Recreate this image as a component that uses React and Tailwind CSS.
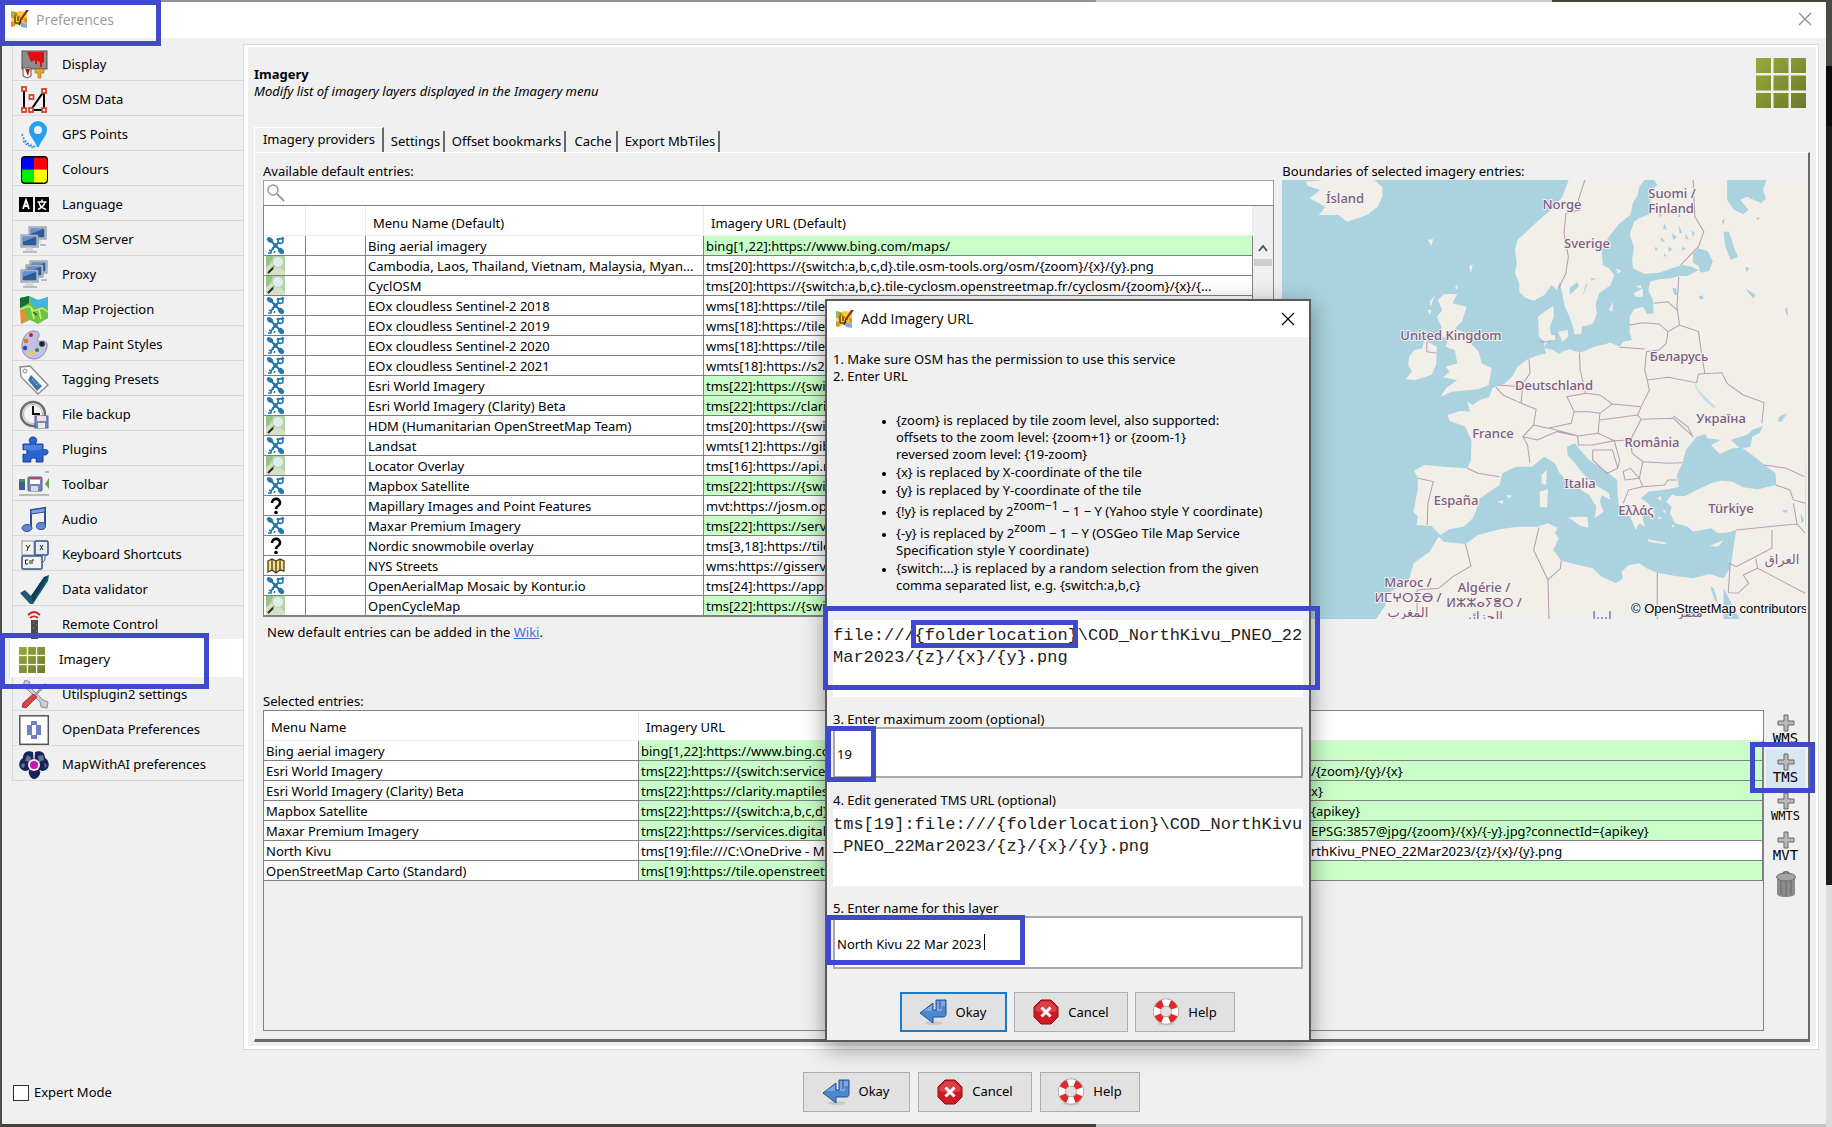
import React from "react";

/* ---------- shared icons ---------- */

function JosmIcon() {
  return (
    <svg width="20" height="20" viewBox="0 0 20 20" aria-hidden="true" className="shrink-0">
      <path d="M1 2l5 1 4-1 7 1v13l-4 1-5-1-6 2z" fill="#f3cf3a" />
      <path d="M1 2l5 1-1 4-4 2z" fill="#8fc15a" />
      <path d="M1 12l4 2v3l-4 1zM14 9h3v5l-3-1z" fill="#d9923a" />
      <path d="M10 13l7 2v4l-6-1z" fill="#8ea7d8" />
      <path d="M5 6v8M8 7v5M5 14h4" stroke="#5b4a20" strokeWidth="1.5" fill="none" />
      <path d="M4 4l9 7M3 9l4-5" stroke="#e0631c" strokeWidth="1.2" />
      <path d="M19 1l-8 11-2 3 .5-4L16 1z" fill="#8c2f10" />
      <path d="M9 16l2-4" stroke="#2a2a2a" strokeWidth="1.3" />
    </svg>
  );
}

function GridIcon({ size }) {
  const cells = [0, 1, 2, 3, 4, 5, 6, 7, 8];
  return (
    <svg width={size} height={size} viewBox="0 0 50 50" aria-hidden="true" className="shrink-0">
      <defs>
        <linearGradient id="olive" gradientUnits="userSpaceOnUse" x1="0" y1="0" x2="50" y2="50">
          <stop offset="0" stopColor="#98aa3d" />
          <stop offset="1" stopColor="#6b7a2a" />
        </linearGradient>
      </defs>
      {cells.map((n) => (
        <rect key={n} x={(n % 3) * 17.5} y={Math.floor(n / 3) * 17.5} width="15" height="15" fill="url(#olive)" />
      ))}
    </svg>
  );
}

function Monitor({ x, y }) {
  return (
    <g transform={`translate(${x} ${y})`}>
      <rect x="0" y="0" width="17" height="12" fill="#dfe3e8" stroke="#7d8794" />
      <rect x="1.5" y="1.5" width="14" height="9" fill="#2f5a9c" />
      <path d="M1.5 1.5h14L1.5 7z" fill="#6b90c8" />
      <path d="M6 12.5h5l2 3.5H3z" fill="#d5d8dc" />
    </g>
  );
}

const sideIcons = {
  display: (
    <>
      <rect x="3" y="1" width="25" height="18" fill="#8d8d8d" stroke="#555" />
      <path d="M8 2h17v10l-2 1v4h-2v-5l-3-1v3h-2v-4l-4 2z" fill="#e01010" />
      <path d="M4 18h8v8l-4 2-4-2z" fill="#f5f5f5" stroke="#555" />
      <path d="M6 19l3 7 2-7z" fill="#d01515" />
      <path d="M16 19h9v4h-3v5h-3v-5h-3z" fill="#e2a82b" stroke="#9a6a10" strokeWidth=".6" />
    </>
  ),
  data: (
    <>
      <path d="M12 25h13V6z" fill="none" stroke="#000" strokeWidth="2" />
      <path d="M5 25V4" stroke="#000" strokeWidth="2" />
      {[[5, 4], [5, 25], [12, 25], [25, 25], [25, 6], [12.5, 12]].map(([x, y]) => (
        <rect key={`${x}-${y}`} x={x - 2} y={y - 2} width="4" height="4" fill="#fff" stroke="#d2452a" strokeWidth="1.8" />
      ))}
    </>
  ),
  gps: (
    <>
      <path d="M19 1a9 9 0 0 1 9 9c0 6-6 10-8 17h-2c-2-7-8-11-8-17a9 9 0 0 1 9-9z" fill="#27a0f2" />
      <circle cx="19" cy="10" r="4" fill="#f0f0f0" />
      <path d="M3 14c2 6 4 10 14 13M4 21c4 4 7 6 12 7" fill="none" stroke="#3a8fe0" strokeWidth="1.6" strokeDasharray="2 1.5" />
    </>
  ),
  colours: (
    <>
      <rect x="2" y="1" width="27" height="28" rx="4" fill="#000" />
      <path d="M15 2.500v12H3V6a3 3 0 0 1 3-3.500z" fill="#00f" />
      <path d="M15 2.500h9a3 3 0 0 1 4 3.500v8.500H15z" fill="#f00" />
      <path d="M3 14.500h12v13H6a3 3 0 0 1-3-3z" fill="#0e0" />
      <path d="M15 14.500h13v10a3 3 0 0 1-4 3h-9z" fill="#ff0" />
    </>
  ),
  language: (
    <>
      <rect x="0" y="7" width="14" height="15" fill="#000" />
      <rect x="16" y="7" width="14" height="15" fill="#000" />
      <path d="M4 19l3-9 3 9M5 16h4" stroke="#fff" strokeWidth="1.8" fill="none" />
      <path d="M18.500 12h9M23 9.500V12M26 12c-1 4-4 6-7 7.500M20 13c1 3 4 5.500 7 6.500" stroke="#fff" strokeWidth="1.5" fill="none" />
    </>
  ),
  server: (
    <>
      <Monitor x="10" y="2" />
      <Monitor x="2" y="10" />
      <path d="M4 27h14M21 20h6" stroke="#b6bcc4" strokeWidth="2" />
    </>
  ),
  proxy: (
    <>
      <Monitor x="11" y="1" />
      <Monitor x="7" y="5" />
      <Monitor x="2" y="10" />
      <path d="M4 27h14M22 20h6" stroke="#b6bcc4" strokeWidth="2" />
    </>
  ),
  projection: (
    <>
      <path d="M1 3l9-2 9 4 10-3v21l-10 6-8-4-9 4z" fill="#6fc24a" />
      <path d="M10 1l9 4 10-3v9l-9 3-6-3z" fill="#45b3e0" />
      <path d="M1 3l9-2v7l-9 5z" fill="#176a3c" />
      <path d="M1 14l5 2 2 9-6 4z" fill="#f08a2a" />
      <path d="M2 14l8-3 5 5 8-3 6 4M12 12l3 12M20 15l2 9" fill="none" stroke="#d8ee6a" strokeWidth="1.5" />
      <path d="M14 17l4 3" stroke="#24602a" strokeWidth="1.5" />
    </>
  ),
  paint: (
    <>
      <path d="M14 1c4 0 6 1 6 4s-3 4-1 6c2 1 8-2 9 3s-4 15-13 15C7 29 2 22 3 14S9 1 14 1z" fill="#c5c1e6" stroke="#777390" strokeWidth=".8" />
      <circle cx="12" cy="5" r="2" fill="#c8202a" />
      <circle cx="7" cy="11" r="2.3" fill="#e07a1c" />
      <circle cx="6" cy="18" r="2.2" fill="#2847c0" />
      <circle cx="12" cy="23" r="2.3" fill="#e9d52d" />
      <circle cx="18" cy="20" r="2" fill="#2f8f3a" />
      <circle cx="23" cy="14" r="2.8" fill="#222" />
    </>
  ),
  tagging: (
    <>
      <path d="M1 2l10-1 18 19-10 9L2 12z" fill="#fbfbfb" stroke="#8b8b8b" strokeWidth="1.3" />
      <circle cx="6" cy="6" r="2" fill="#f0f0f0" stroke="#8b8b8b" />
      <path d="M12 10l11 11-5 5-9-11z" fill="#3f73a8" />
      <path d="M13 14l6 7M16 13l5 7" stroke="#bcd3ea" strokeDasharray="2 1" />
    </>
  ),
  backup: (
    <>
      <circle cx="14" cy="14" r="12" fill="#f4f4f0" stroke="#6d6d6d" strokeWidth="2.5" />
      <circle cx="14" cy="14" r="9.5" fill="none" stroke="#b5b5b5" />
      <path d="M14 6v8h7" stroke="#111" strokeWidth="2" fill="none" />
      <rect x="16" y="16" width="13" height="12" fill="#6e8cc0" stroke="#4a6394" />
      <rect x="18" y="16" width="9" height="5" fill="#f6dede" />
      <rect x="19" y="23" width="7" height="5" fill="#e8e8e8" />
    </>
  ),
  plugins: (
    <>
      <path
        d="M4 9h8c-3-3-2-7 2-7s5 4 2 7h8v6c1-1 5-1 5 2s-4 4-5 2v8h-7c1-3 0-4-2-4s-4 1-3 4H4v-8c3 1 4 0 4-2s-1-3-4-2z"
        fill="#2a62cf"
        stroke="#1c3f91"
      />
      <path d="M5 10h18v4c-6 2-12 2-18 0z" fill="#5c8ce6" opacity=".7" />
    </>
  ),
  toolbar: (
    <>
      <rect x="0" y="9" width="6" height="11" fill="#3c5f94" />
      <rect x="0" y="9" width="6" height="3" fill="#4d8a63" />
      <rect x="9" y="7" width="14" height="14" rx="1" fill="#7684b6" stroke="#54608c" />
      <rect x="11" y="8" width="10" height="6" fill="#fff" />
      <rect x="11" y="8" width="10" height="1.5" fill="#d43c3c" />
      <rect x="12" y="16" width="7" height="5" fill="#d7dae6" />
      <path d="M30 8v11l-4-5z" fill="#5ca53f" />
      <path d="M0 25h30" stroke="#6f8f6a" />
      <path d="M26 2h4" stroke="#7a8a98" />
    </>
  ),
  audio: (
    <>
      <path d="M12 23V5l14-2v18" fill="none" stroke="#2c4f9e" strokeWidth="2" />
      <path d="M12 5l14-2v4L12 9z" fill="#7ea2dc" stroke="#2c4f9e" />
      <ellipse cx="8" cy="23" rx="5" ry="3.5" fill="#5f88cf" stroke="#2c4f9e" />
      <ellipse cx="22" cy="21" rx="4.5" ry="3.5" fill="#5f88cf" stroke="#2c4f9e" />
    </>
  ),
  keyboard: (
    <>
      <rect x="3" y="1" width="12" height="14" fill="#f4f4ee" stroke="#8d96a6" />
      <rect x="16" y="1" width="13" height="14" rx="1" fill="#e9edf3" stroke="#33518c" strokeWidth="1.5" />
      <rect x="3" y="16" width="20" height="13" rx="1" fill="#f4f4ee" stroke="#33518c" strokeWidth="1.5" />
      <path d="M23 22c3 0 3-3 3-6" fill="none" stroke="#33518c" />
      <path d="M7 5l2 3 2-3M9 8l-1 3M21 5l3 5M24 5l-3 5M9 20H6.500v4H9M11 20v4M15 20h-2v4" stroke="#222" fill="none" />
    </>
  ),
  validator: (
    <>
      <path d="M1 18l5-3 6 6L25 2l5-2-1 6-15 23h-3z" fill="#1c5a70" />
      <path d="M12 21L25 2l4-1-15 26z" fill="#0f3f55" />
    </>
  ),
  remote: (
    <>
      <path d="M9 5c4-4 8-4 12 0M11 8c3-2.500 5-2.500 8 0" fill="none" stroke="#d01f1f" strokeWidth="1.8" />
      <rect x="12" y="10" width="7" height="19" fill="#4e4a48" />
      <path d="M14 13h1M17 15h1M14 18h1M17 21h1" stroke="#9b9691" />
    </>
  ),
  utils: (
    <>
      <path d="M6 0l5 2-1 4 14 14 5 2-1 6-6-1-1-5L8 9 3 8z" fill="#c9ccd2" stroke="#8b8f97" />
      <path d="M27 4l-12 12" stroke="#9aa0aa" strokeWidth="2.5" />
      <path d="M14 14l4 3-11 11-4-1 1-4z" fill="#d94343" stroke="#932222" strokeWidth=".7" />
    </>
  ),
  opendata: (
    <>
      <rect x=".8" y=".8" width="28.5" height="28.5" fill="#fff" stroke="#555" strokeWidth="1.5" />
      <path d="M12 6h6v4h-6zM12 20h6v4h-6zM8 10h5v10H8zM17 10h5v10h-5z" fill="#6c84c4" />
    </>
  ),
  ai: (
    <>
      <path d="M14 2C8 0 4 3 4 8c-4 2-5 8-2 11 3 3 7 2 9 0l4-3zM16 2c6-2 10 1 10 6 4 2 5 8 2 11-3 3-7 2-9 0l-4-3z" fill="#14235c" />
      <path d="M15 18c-5 0-6 3-5 6s3 5 5 5 5-2 6-5-1-6-6-6z" fill="#14235c" />
      <path d="M8 5l4 2-1 5-5-1zM19 6l5-1 1 5-5 2zM3 13l3 1-1 4-3-1zM25 13l3 2-2 3z" fill="#6c7187" />
      <circle cx="15" cy="15" r="6" fill="#f4eef4" />
      <circle cx="15" cy="15" r="4" fill="#d010b8" />
    </>
  ),
};

function SideIcon({ name }) {
  return (
    <svg width="30" height="30" viewBox="0 0 30 30" aria-hidden="true" className="shrink-0">
      {sideIcons[name]}
    </svg>
  );
}

function OkIcon() {
  return (
    <svg width="28" height="28" viewBox="0 0 28 28" aria-hidden="true">
      <ellipse cx="15" cy="25" rx="9" ry="2" fill="#c9c9c9" />
      <path d="M17 2h10v14c0 2-1 3-3 3H14v6L1 15 14 5v7h3z" fill="#4f86d0" stroke="#244f93" />
      <path d="M18 3h8v5h-3v5H4l9-6v6h5z" fill="#8db4e8" opacity=".7" />
      <path d="M21 2v9" stroke="#244f93" />
    </svg>
  );
}

function CancelIcon() {
  return (
    <svg width="28" height="28" viewBox="0 0 28 28" aria-hidden="true">
      <path d="M9 2h10l7 7v10l-7 7H9l-7-7V9z" fill="#cf1b24" stroke="#8d0d12" />
      <path d="M9.500 3.500h9l6 6V13c-7 2-14 2-21 0V9.500z" fill="#e8656a" opacity=".5" />
      <path d="M9.500 9.500l9 9M18.500 9.500l-9 9" stroke="#fff" strokeWidth="3" />
    </svg>
  );
}

function HelpIcon() {
  return (
    <svg width="28" height="28" viewBox="0 0 28 28" aria-hidden="true">
      <ellipse cx="14" cy="26" rx="9" ry="1.5" fill="#c9c9c9" />
      <circle cx="14" cy="13.5" r="9" fill="none" stroke="#a89a9a" strokeWidth="8" />
      <circle cx="14" cy="13.5" r="9" fill="none" stroke="#fdfdfd" strokeWidth="6.5" />
      <circle
        cx="14"
        cy="13.5"
        r="9"
        fill="none"
        stroke="#dc2a2a"
        strokeWidth="6.5"
        strokeDasharray="7.07 7.07"
        strokeDashoffset="-3.5"
      />
    </svg>
  );
}

/* ---------- small table icons ---------- */

function RowIcon({ kind }) {
  if (kind === "sat")
    return (
      <svg width="19" height="19" viewBox="0 0 19 19" aria-label="Aerial" className="block">
        <ellipse cx="4" cy="4" rx="3.5" ry="2.3" transform="rotate(35 4 4)" fill="#2378ae" />
        <ellipse cx="15" cy="15" rx="3.5" ry="2.6" transform="rotate(45 15 15)" fill="#2378ae" />
        <path d="M6 6l7 7M13 6l-7 7" stroke="#2378ae" strokeWidth="2" />
        <circle cx="9.5" cy="9.5" r="2.2" fill="#2378ae" />
        <circle cx="14.5" cy="5" r="2.4" fill="none" stroke="#2378ae" strokeWidth="1.6" />
        <path d="M16 1l2 2M12 2l-1 2M2 17h3c0-3 1-4 3-4M3 14l2 1M8 17l1-2" stroke="#2378ae" strokeWidth="1.6" fill="none" />
      </svg>
    );
  if (kind === "map")
    return (
      <svg width="19" height="19" viewBox="0 0 19 19" aria-label="Map" className="block">
        <rect width="19" height="19" fill="#b9d3a2" />
        <path d="M0 12l7-6 12 10v3H0z" fill="#d5e2c6" />
        <path d="M0 0h7l-3 8-4 3z" fill="#9cc186" />
        <circle cx="12" cy="6" r="5.5" fill="#dfeee6" stroke="#b9cfc0" />
        <path d="M8 10l-3 4" stroke="#8a8f7c" strokeWidth="1.5" />
        <path d="M7 12l-5 5" stroke="#2a2c24" strokeWidth="2.2" />
      </svg>
    );
  if (kind === "ask")
    return (
      <svg width="19" height="19" viewBox="0 0 19 19" aria-label="Other" className="block">
        <path d="M6 7c0-5.500 8-5.500 8 0 0 3.500-4 2.500-4 6" fill="none" stroke="#000" strokeWidth="2.6" />
        <circle cx="10" cy="16.500" r="1.800" />
      </svg>
    );
  return (
    <svg width="19" height="19" viewBox="0 0 19 19" aria-label="Street map" className="block">
      <path d="M2 5l4-2 4 2 4-2 4 2v10l-4-1-4 3-4-3-4 2z" fill="#f3dc8c" stroke="#4b3d16" strokeWidth="1.3" />
      <path d="M6 3v11M10 5v11M14 3v11" stroke="#4b3d16" strokeWidth="1.3" />
    </svg>
  );
}

/* ---------- data ---------- */

const tabs = [
  ["display", "Display"],
  ["data", "OSM Data"],
  ["gps", "GPS Points"],
  ["colours", "Colours"],
  ["language", "Language"],
  ["server", "OSM Server"],
  ["proxy", "Proxy"],
  ["projection", "Map Projection"],
  ["paint", "Map Paint Styles"],
  ["tagging", "Tagging Presets"],
  ["backup", "File backup"],
  ["plugins", "Plugins"],
  ["toolbar", "Toolbar"],
  ["audio", "Audio"],
  ["keyboard", "Keyboard Shortcuts"],
  ["validator", "Data validator"],
  ["remote", "Remote Control"],
  ["imagery", "Imagery"],
  ["utils", "Utilsplugin2 settings"],
  ["opendata", "OpenData Preferences"],
  ["ai", "MapWithAI preferences"],
];

const defaults = [
  ["sat", "Bing aerial imagery", "bing[1,22]:https://www.bing.com/maps/", true],
  ["map", "Cambodia, Laos, Thailand, Vietnam, Malaysia, Myan...", "tms[20]:https://{switch:a,b,c,d}.tile.osm-tools.org/osm/{zoom}/{x}/{y}.png"],
  ["map", "CyclOSM", "tms[20]:https://{switch:a,b,c}.tile-cyclosm.openstreetmap.fr/cyclosm/{zoom}/{x}/{..."],
  ["sat", "EOx cloudless Sentinel-2 2018", "wms[18]:https://tiles.maps.eox.at/wms"],
  ["sat", "EOx cloudless Sentinel-2 2019", "wms[18]:https://tiles.maps.eox.at/wms"],
  ["sat", "EOx cloudless Sentinel-2 2020", "wms[18]:https://tiles.maps.eox.at/wms"],
  ["sat", "EOx cloudless Sentinel-2 2021", "wmts[18]:https://s2maps-tiles.eu/wmts"],
  ["sat", "Esri World Imagery", "tms[22]:https://{switch:services,server}.arcgisonline.com", true],
  ["sat", "Esri World Imagery (Clarity) Beta", "tms[22]:https://clarity.maptiles.arcgis.com", true],
  ["map", "HDM (Humanitarian OpenStreetMap Team)", "tms[20]:https://{switch:a,b}.tile.openstreetmap.fr"],
  ["sat", "Landsat", "wmts[12]:https://gibs.earthdata.nasa.gov"],
  ["map", "Locator Overlay", "tms[16]:https://api.mapbox.com"],
  ["sat", "Mapbox Satellite", "tms[22]:https://{switch:a,b,c,d}.tiles.mapbox.com", true],
  ["ask", "Mapillary Images and Point Features", "mvt:https://josm.openstreetmap.de/mapillary"],
  ["sat", "Maxar Premium Imagery", "tms[22]:https://services.digitalglobe.com", true],
  ["ask", "Nordic snowmobile overlay", "tms[3,18]:https://tiles.opensnowmap.org"],
  ["old", "NYS Streets", "wms:https://gisservices.its.ny.gov"],
  ["sat", "OpenAerialMap Mosaic by Kontur.io", "tms[24]:https://apps.kontur.io/raster-tiler"],
  ["map", "OpenCycleMap", "tms[22]:https://{switch:a,b,c}.tile.thunderforest.com", true],
];

const selected = [
  ["Bing aerial imagery", "bing[1,22]:https://www.bing.com/maps/", "", true],
  ["Esri World Imagery", "tms[22]:https://{switch:services,server}.arcgisonline.com/arcgis/rest/services/World_Imagery/MapServer/tile", "/{zoom}/{y}/{x}", true],
  ["Esri World Imagery (Clarity) Beta", "tms[22]:https://clarity.maptiles.arcgis.com/arcgis/rest/services/World_Imagery/MapServer/tile/{zoom}/{y}/{", "x}", true],
  ["Mapbox Satellite", "tms[22]:https://{switch:a,b,c,d}.tiles.mapbox.com/v4/mapbox.satellite/{zoom}/{x}/{y}.jpg?access_token=", "{apikey}", true],
  ["Maxar Premium Imagery", "tms[22]:https://services.digitalglobe.com/earthservice/tmsaccess/tms/1.0.0/DigitalGlobe:ImageryTileService@", "EPSG:3857@jpg/{zoom}/{x}/{-y}.jpg?connectId={apikey}", true],
  ["North Kivu", "tms[19]:file:///C:\\OneDrive - MapAction\\Imagery\\Democratic Republic of Congo\\PNEO\\COD_No", "rthKivu_PNEO_22Mar2023/{z}/{x}/{y}.png"],
  ["OpenStreetMap Carto (Standard)", "tms[19]:https://tile.openstreetmap.org/{zoom}/{x}/{y}.png", "", true],
];

/* ---------- map preview ---------- */

const labels = [
  ["Ísland", 210, 160],
  ["Norge", 813, 177],
  ["Suomi /", 1120, 144],
  ["Finland", 1118, 189],
  ["Sverige", 885, 294],
  ["United Kingdom", 505, 571],
  ["Беларусь", 1140, 633],
  ["Deutschland", 793, 721],
  ["Україна", 1257, 818],
  ["France", 621, 863],
  ["România", 1065, 890],
  ["Italia", 864, 1015],
  ["España", 519, 1066],
  ["Ελλάς", 1020, 1096],
  ["Türkiye", 1287, 1090],
  ["العراق", 1428, 1243],
  ["Maroc /", 384, 1311],
  ["ⵍⵎⵖⵔⵉⴱ /", 384, 1355],
  ["المغرب", 384, 1400],
  ["Algérie /", 596, 1325],
  ["ⵍⵣⵣⴰⵢⴻⵔ /", 596, 1370],
  ["الجزائر", 598, 1412],
  ["ليبيا", 927, 1412],
  ["مصر", 1170, 1400],
];

function EuropeMap() {
  return (
    <svg
      viewBox="0 0 524 439"
      preserveAspectRatio="xMinYMin slice"
      role="img"
      aria-label="Map of Europe"
      className="block h-[439px] w-full bg-[#aad3df]"
    >
      <g transform="scale(.3584 .3333) translate(-33 -90)">
        <g fill="#f2efe9">
          <path d="M833 90L815 140 790 175 760 200 735 225 715 245 690 270 683 300 688 340 683 370 695 400 695 425 712 443 735 452 765 435 785 405 800 420 808 395 815 430 822 470 835 500 845 530 848 553 868 553 870 530 900 522 912 490 908 465 918 430 950 405 960 375 945 355 928 345 925 300 945 260 975 220 1005 195 1012 160 1025 135 1030 110 1045 90Z" />
          <path d="M1072 90L1080 105 1058 130 1065 190 1030 205 1015 215 1003 255 1015 290 1010 330 1012 355 1045 372 1085 368 1120 355 1150 345 1175 350 1195 360 1165 378 1140 378 1120 385 1085 388 1060 395 1055 420 1068 450 1070 490 1052 492 1040 470 1015 478 1003 500 1003 550 1010 570 985 575 975 590 950 578 905 590 865 608 835 598 815 605 805 612 790 600 765 595 765 575 750 560 747 500 765 485 790 468 792 500 780 530 785 560 765 590 770 610 740 618 715 630 690 650 675 680 655 700 620 715 612 740 585 750 565 765 550 755 558 785 530 783 495 795 500 812 545 830 552 850 562 870 560 930 550 955 500 952 430 945 402 962 412 985 412 1015 400 1085 412 1100 408 1125 450 1128 475 1155 500 1138 540 1130 565 1105 575 1080 585 1045 640 1005 648 970 685 950 730 950 765 920 795 940 805 965 820 985 860 1015 890 1035 910 1070 905 1105 930 1085 920 1055 925 1035 950 1050 945 1030 900 1000 872 970 850 940 830 915 828 890 850 880 865 900 890 930 945 970 968 990 970 1040 975 1080 1005 1100 1020 1140 1030 1120 1045 1130 1035 1085 1075 1095 1055 1060 1035 1045 1055 1025 1110 1018 1140 1010 1135 975 1150 940 1160 900 1190 860 1215 852 1220 865 1258 870 1230 885 1255 912 1290 895 1310 893 1285 870 1330 855 1345 840 1375 828 1365 850 1345 860 1340 890 1318 895 1345 915 1380 945 1410 970 1412 1005 1360 1018 1320 1012 1290 995 1260 992 1230 1000 1180 1025 1165 1035 1120 1035 1105 1055 1120 1070 1115 1090 1130 1120 1165 1130 1180 1145 1230 1135 1250 1150 1275 1148 1300 1140 1493 1150 1500 90 1385 90 1375 120 1383 145 1370 160 1330 140 1312 150 1335 180 1320 193 1295 180 1275 150 1275 90Z" />
          <path d="M470 1160L485 1175 545 1182 580 1155 640 1138 690 1130 745 1130 775 1120 802 1133 795 1150 805 1165 790 1200 812 1232 860 1245 900 1255 925 1280 965 1300 985 1285 980 1265 1000 1245 1030 1240 1050 1255 1080 1268 1130 1278 1180 1285 1225 1272 1265 1285 1285 1250 1300 1140 1500 1130 1500 1407 295 1407 320 1370 328 1330 380 1300 390 1280 400 1240 445 1205Z" />
          <path d="M485 432L522 432 508 460 548 470 535 515 515 535 545 550 560 580 582 605 590 640 618 655 610 705 580 718 535 722 505 725 475 742 490 715 522 690 483 682 500 665 490 650 522 640 515 600 490 590 497 565 470 560 478 530 465 500 480 480 468 450Z" />
          <path d="M430 570L465 590 463 645 450 675 405 690 378 688 395 665 385 645 388 620 402 600 425 595Z" />
          <path d="M100 95L150 90 290 90 313 110 313 140 300 170 270 195 215 215 190 195 135 195 155 170 110 145 140 120 105 108Z" />
          <path d="M752 1025L775 1018 773 1072 753 1072ZM757 975L772 960 770 1005 757 1000ZM832 1102L885 1100 888 1133 865 1127ZM1055 1168L1107 1178 1100 1183 1055 1175ZM1225 1188L1265 1170 1250 1190ZM633 1055L650 1050 650 1062ZM803 545L830 540 832 560 815 575ZM775 555l20 0 0 15-15 0ZM945 480L957 455 955 485ZM440 270l15-3-5 20ZM555 350l10-8-5 28ZM445 455l15-20-12 35ZM440 480l10 0-5 15ZM1015 430l25-15 0 25-20 0ZM1020 410l15-5 0 10z" />
          <path d="M515 415l8-12 0 15zM660 1035l15 2-10 8zM1080 1045l10-8 2 15zM1095 1080l8 0 0 12zM1080 1100l14 4-8 4zM1120 1125l8 0-4 10zM965 355l15 8-10 8z" />
        </g>
        <g fill="#aad3df">
          <path d="M835 415l22-18 5 12-25 25zM880 405l6-5-15 40zM895 385l18 0-18 8zM1180 310l15-15 25 8 15 30-10 30-25 5-5-20-15-10zM1265 245l15 0 15 50 10 25-20 10-15-40zM1195 440l12-4 2 12-10 0zM1325 415l30 20-8 10zM1122 415l10-2 4 22-8 0zM1420 800l22-10-15 25-10 0zM1265 1315l45 92-45 0zM1228 1310l10 5 12 45-10-10zM1125 1030l40 0-5 8-30 0zM1480 1090l10 20-8 10z" />
          <path d="M1100 220l8 20-12-5zM1120 250l15 10-10 10zM1140 225l10 25-8 0zM1090 260l12 15-12 0zM1160 250l8 20-10-5zM1110 290l14 8-12 8zM1150 290l10 6-12 6zM1075 290l8 10-10 0zM1175 240l10 10-5 12zM1100 310l6 8-8 2zM1355 205l12-4-6 10zM1260 215l8-10-2 20zM1325 350l12 5-8 12zM1435 480l8-10 2 30zM1427 1080l18 0-6 10zM1085 190l8 6-8 6zM1140 190l6 10-8 2z" />
          <path d="M1187 700l8 20 48 50-4 6-30-28-24-38z" opacity=".6" />
        </g>
        <g fill="none" stroke="#b79fb3" strokeWidth="3">
          <path d="M878 90L860 150 865 180 825 190 820 250 832 320 825 370 805 415M1180 90L1185 200 1210 245 1195 290 1145 345M1140 380L1135 470 1142 525M1070 460L1110 455 1135 480M1003 525L1040 518 1085 522 1110 545 1142 525 1195 545 1205 620 1213 672M1110 545L1105 580 1085 600 1050 605 1045 660 1052 690 1110 682 1190 698 1195 672 1260 668 1275 700 1320 735 1378 758 1372 820M975 592L1045 597M1052 690L1058 720 1035 770 1025 795M722 628L725 670 705 700 700 760M630 712L650 735 690 755 742 778 735 825 705 860 718 885 725 940M637 705L700 710M863 610L865 660 880 730 828 740 848 785 840 820 775 835 735 825M880 730L920 735 955 762 1035 770M848 785L890 785 920 790 955 762M920 790L915 850 860 858 780 835M920 810L1025 795 1035 808 1005 870 960 872 915 850M1035 808L1125 805 1180 860M1125 798L1165 830 1180 862M705 860L745 870 800 845 858 858 860 885 900 885 960 872 975 930 970 955M900 900L955 900 970 955 940 970 900 930 900 900M1005 870L1010 910 1040 935 1110 940 1150 938M1040 935L1030 985 990 990 985 965 1005 955 1030 985 1040 1010 1000 1020 985 1060M1040 1010L1100 1005 1110 990 1135 990M550 955L580 970 640 980M412 985L455 995 440 1060 438 1125M753 575L782 575M437 575L437 605 465 610" />
          <path d="M545 1182L560 1248 510 1280 470 1315 410 1320 410 1407M750 1133L735 1200 775 1290 778 1407M812 1232L810 1255 775 1290M1080 1268L1080 1407M1378 945L1440 955 1490 980M1410 1005L1450 1020 1460 1050 1493 1060M1300 1140L1390 1130 1470 1122 1460 1060M1400 1140L1400 1195 1300 1250 1280 1240M1355 1225L1360 1255 1493 1330M1360 1255L1320 1275 1335 1300 1305 1330 1278 1328M1283 1250L1278 1330M1470 1122L1493 1150" />
        </g>
      </g>
      <g
        fontFamily='"Noto Sans", "DejaVu Sans", sans-serif'
        fontSize="13"
        fontWeight="500"
        fill="#7d5c80"
        stroke="#f4f1ee"
        strokeWidth="2"
        paintOrder="stroke"
        textAnchor="middle"
      >
        {labels.map(([t, x, y]) => (
          <text key={t} x={Math.round((x - 33) * 0.3584)} y={Math.round((y - 90) / 3)}>
            {t}
          </text>
        ))}
      </g>
      <text
        x="349"
        y="433"
        fontFamily='"Liberation Sans", Arial, sans-serif'
        fontSize="13"
        fill="#000"
        stroke="#f4f4f4"
        strokeWidth="2"
        paintOrder="stroke"
      >
        © OpenStreetMap contributors
      </text>
    </svg>
  );
}

/* ---------- pieces ---------- */

function ActionButton({ icon, children, focused, className }) {
  return (
    <button
      type="button"
      className={`flex h-10 items-center justify-center gap-2 bg-[#e1e1e1] ${
        focused ? "border-2 border-[#1a7cc6]" : "border border-[#adadad]"
      } ${className}`}
    >
      {icon}
      {children}
    </button>
  );
}

function Marker({ className }) {
  return <div aria-hidden="true" className={`pointer-events-none absolute border-[5px] border-[#4048cc] ${className}`} />;
}

function SourceButton({ label, active, small }) {
  return (
    <button
      type="button"
      className={`flex h-[39px] w-full flex-col items-center pt-1 ${active ? "bg-[#d8e6f2]" : ""}`}
    >
      <svg width="18" height="18" viewBox="0 0 18 18" aria-hidden="true" className="shrink-0">
        <path d="M7 1h4v6h6v4h-6v6H7v-6H1V7h6z" fill="#b9b9b9" stroke="#686868" />
      </svg>
      <span className={`font-['DejaVu_Sans_Mono',monospace] leading-[13px] ${small ? "text-[12px]" : "text-[14px]"}`}>
        {label}
      </span>
    </button>
  );
}

function Sidebar() {
  return (
    <nav aria-label="Preference sections" className="relative ml-[10px] mt-2 w-[231px] shrink-0">
      <ul>
        {tabs.map(([icon, label]) =>
          icon === "imagery" ? (
            <li key={icon} className="relative z-10 -mb-px -ml-[3px] -mt-[2px]">
              <button type="button" aria-current="page" className="flex h-[38px] w-full items-center border-l border-[#e0e0e0] bg-white pl-[9px] pt-1 text-left">
                <GridIcon size={26} />
                <span className="pl-[14px]">{label}</span>
              </button>
            </li>
          ) : (
            <li key={icon}>
              <button type="button" className="flex h-[35px] w-full items-center gap-[13px] border-b border-l border-[#d9d9d9] pl-[6px] pt-1 text-left">
                <SideIcon name={icon} />
                {label}
              </button>
            </li>
          )
        )}
      </ul>
      <Marker className="-left-[12px] top-[587px] z-20 h-[56px] w-[209px]" />
    </nav>
  );
}

function DefaultsTable() {
  return (
    <div className="flex h-[412px] border border-b-2 border-[#82828a] bg-white">
      <table className="w-full flex-1 table-fixed border-separate border-spacing-0">
        <colgroup>
          <col className="w-[42px]" />
          <col className="w-[60px]" />
          <col className="w-[338px]" />
          <col />
        </colgroup>
        <thead>
          <tr className="h-[30px] text-left">
            <th aria-label="Type" className="border-b border-r border-[#ebebeb]" />
            <th aria-label="Category" className="border-b border-r border-[#ebebeb]" />
            <th className="border-b border-r border-[#ebebeb] p-0 pl-[7px] pt-[5px] font-normal">Menu Name (Default)</th>
            <th className="border-b border-r border-[#ebebeb] p-0 pl-[7px] pt-[5px] font-normal">Imagery URL (Default)</th>
          </tr>
        </thead>
        <tbody>
          {defaults.map(([kind, name, url, on]) => (
            <tr key={name} className="h-5">
              <td className="border-b border-r border-[#808080] p-0 pl-[2px]">
                <RowIcon kind={kind} />
              </td>
              <td className="border-b border-r border-[#808080] p-0" />
              <td className="truncate border-b border-r border-[#808080] p-0 pl-[2px] pt-[2px] leading-[17px]">{name}</td>
              <td className={`overflow-hidden whitespace-nowrap border-b border-r border-[#808080] p-0 pl-[2px] pt-[2px] leading-[17px] ${on ? "bg-[#c8ffc8]" : ""}`}>
                {url}
              </td>
            </tr>
          ))}
        </tbody>
      </table>
      <div className="flex w-[20px] shrink-0 flex-col items-center bg-[#f0f0f0] pt-[38px]">
        <svg width="10" height="8" viewBox="0 0 10 8" aria-hidden="true">
          <path d="M1 7l4-5 4 5" fill="none" stroke="#505050" strokeWidth="1.8" />
        </svg>
        <div className="mt-[7px] h-[7px] w-[18px] bg-[#cdcdcd]" />
      </div>
    </div>
  );
}

function SelectedTable() {
  return (
    <div className="min-w-0 flex-1 border border-[#82828a]">
      <table className="w-full table-fixed border-separate border-spacing-0">
        <colgroup>
          <col className="w-[375px]" />
          <col />
        </colgroup>
        <thead>
          <tr className="h-[30px] bg-white text-left">
            <th className="border-b border-r border-[#ebebeb] p-0 pl-[7px] pt-1 font-normal">Menu Name</th>
            <th className="border-b border-[#ebebeb] p-0 pl-[7px] pt-1 font-normal">Imagery URL</th>
          </tr>
        </thead>
        <tbody>
          {selected.map(([name, head, tail, on]) => (
            <tr key={name} className="h-5">
              <td className="border-b border-r border-[#808080] bg-white p-0 pl-[2px] pt-[2px] leading-[17px]">{name}</td>
              <td className={`overflow-hidden whitespace-nowrap border-b border-r border-[#808080] p-0 pl-[2px] pt-[2px] leading-[17px] ${on ? "bg-[#c8ffc8]" : "bg-white"}`}>
                <span className="inline-block w-[670px] overflow-hidden align-top">{head}</span>
                {tail}
              </td>
            </tr>
          ))}
        </tbody>
      </table>
    </div>
  );
}

function ImageryPage() {
  return (
    <main className="mb-0 mr-[7px] mt-[6px] flex min-w-0 flex-1 flex-col border border-[#d9d9d9]">
      <div className="flex flex-1 flex-col border-4 border-b-[3px] border-r-2 border-t-2 border-white pb-1 pl-[6px] pr-[6px] pt-[19px]">
        <header className="flex h-[61px] justify-between">
          <div className="leading-[17px]">
            <h1 className="font-bold">Imagery</h1>
            <p className="italic">Modify list of imagery layers displayed in the Imagery menu</p>
          </div>
          <div className="-mt-2 mr-1">
            <GridIcon size={50} />
          </div>
        </header>
        <div role="tablist" className="flex h-[25px] items-end">
          <button type="button" role="tab" aria-selected="true" className="h-[25px] w-[130px] border-l border-r-2 border-t border-l-white border-r-[#696969] border-t-white pl-px">
            Imagery providers
          </button>
          <button type="button" role="tab" className="h-[21px] w-[61px] border-r-2 border-[#696969] pl-1 text-center">Settings</button>
          <button type="button" role="tab" className="h-[21px] w-[121px] border-r-2 border-[#696969] pl-1 text-center">Offset bookmarks</button>
          <button type="button" role="tab" className="h-[21px] w-[52px] border-r-2 border-[#696969] pl-1 text-center">Cache</button>
          <button type="button" role="tab" className="h-[21px] w-[102px] border-r-2 border-[#696969] pl-1 text-center">Export MbTiles</button>
        </div>
        <section className="flex flex-1 flex-col border-b-[3px] border-l border-r-2 border-t border-b-[#696969] border-l-white border-r-[#696969] border-t-white pb-2 pl-2 pr-[2px] pt-[10px] leading-[17px]">
          <div className="grid grid-cols-[1012fr_524fr] gap-2">
            <div className="min-w-0">
              <label htmlFor="search" className="block">Available default entries:</label>
              <div className="flex h-[25px] items-center border border-b-0 border-[#a0a0a8] bg-white pl-[2px]">
                <svg width="20" height="20" viewBox="0 0 20 20" aria-hidden="true">
                  <circle cx="7" cy="7" r="5" fill="none" stroke="#9a9a9a" strokeWidth="1.5" />
                  <path d="M11 11l7 7" stroke="#9a9a9a" strokeWidth="1.8" />
                </svg>
                <input id="search" type="text" className="h-full min-w-0 flex-1 bg-transparent outline-none" />
              </div>
              <DefaultsTable />
            </div>
            <div className="min-w-0">
              <p>Boundaries of selected imagery entries:</p>
              <EuropeMap />
            </div>
          </div>
          <p className="pl-1 pt-[5px]">
            New default entries can be added in the{" "}
            <a href="#wiki" className="text-[#3b73d9] underline">Wiki</a>.
          </p>
          <p className="pt-[52px]">Selected entries:</p>
          <div className="flex flex-1">
            <SelectedTable />
            <div className="relative ml-[2px] mr-[1px] w-[39px] shrink-0">
              <SourceButton label="WMS" />
              <SourceButton label="TMS" active />
              <SourceButton label="WMTS" small />
              <SourceButton label="MVT" />
              <button type="button" aria-label="Remove" className="flex h-[38px] w-full justify-center pt-[5px]">
                <svg width="20" height="27" viewBox="0 0 20 27" aria-hidden="true">
                  <path d="M1 6h18v17c0 4-18 4-18 0z" fill="#8c8c8c" />
                  <path d="M5 9v15M10 9v16M15 9v15" stroke="#767676" strokeWidth="1.5" />
                  <ellipse cx="10" cy="6" rx="9.5" ry="4" fill="#a3a3a3" stroke="#6f6f6f" />
                  <path d="M7 3c0-3 6-3 6 0" fill="none" stroke="#6f6f6f" strokeWidth="1.5" />
                </svg>
              </button>
              <Marker className="-left-[16px] top-[32px] h-[51px] w-[65px]" />
            </div>
          </div>
        </section>
      </div>
    </main>
  );
}

function AddImageryDialog() {
  return (
    <div
      role="dialog"
      aria-label="Add Imagery URL"
      className="absolute left-[825px] top-[299px] z-30 w-[486px] border-2 border-[#5a5a5a] bg-[#f0f0f0] pb-[8px] shadow-[0_6px_22px_rgba(0,0,0,0.4)]"
    >
      <div className="flex h-9 items-center bg-white pb-px pl-2 pr-[14px] font-['Open_Sans',sans-serif] text-[14px]">
        <JosmIcon />
        <span className="flex-1 pl-[6px]">Add Imagery URL</span>
        <button type="button" aria-label="Close">
          <svg width="14" height="14" viewBox="0 0 14 14" aria-hidden="true">
            <path d="M1 1l12 12M13 1L1 13" stroke="#000" strokeWidth="1.2" />
          </svg>
        </button>
      </div>
      <form className="px-[6px] pt-[14px] leading-[17px]" onSubmit={(e) => e.preventDefault()}>
        <p>1. Make sure OSM has the permission to use this service</p>
        <p>2. Enter URL</p>
        <ul className="mt-[27px] flex list-disc flex-col gap-px pl-[63px] pr-5 marker:text-[10px]">
          <li>
            {"{zoom} is replaced by tile zoom level, also supported:"}
            <br />
            {"offsets to the zoom level: {zoom+1} or {zoom-1}"}
            <br />
            {"reversed zoom level: {19-zoom}"}
          </li>
          <li>{"{x} is replaced by X-coordinate of the tile"}</li>
          <li>{"{y} is replaced by Y-coordinate of the tile"}</li>
          <li className="whitespace-nowrap pt-[3px]">
            {"{!y} is replaced by 2"}
            <sup className="text-[12px] leading-none">zoom−1</sup>
            {" − 1 − Y (Yahoo style Y coordinate)"}
          </li>
          <li className="whitespace-nowrap pt-1">
            {"{-y} is replaced by 2"}
            <sup className="text-[12px] leading-none">zoom</sup>
            {" − 1 − Y (OSGeo Tile Map Service"}
            <br />
            Specification style Y coordinate)
          </li>
          <li className="whitespace-nowrap">
            {"{switch:...} is replaced by a random selection from the given"}
            <br />
            {"comma separated list, e.g. {switch:a,b,c}"}
          </li>
        </ul>
        <div className="relative mt-[26px]">
          <textarea
            aria-label="URL"
            spellCheck={false}
            defaultValue={"file:///{folderlocation}\\COD_NorthKivu_PNEO_22\nMar2023/{z}/{x}/{y}.png"}
            className="block h-[77px] w-full resize-none overflow-hidden whitespace-pre bg-white pt-[5px] font-['Liberation_Mono',monospace] text-[17px] leading-[22px] text-[#222222] outline-none"
          />
          <Marker className="-left-[10px] -right-[17px] -top-[14px] h-[84px]" />
          <Marker className="left-[78px] top-0 h-[28px] w-[167px]" />
        </div>
        <div className="relative mt-[14px]">
          <label htmlFor="maxzoom" className="block">3. Enter maximum zoom (optional)</label>
          <input id="maxzoom" type="text" defaultValue="19" className="-mt-px block h-[51px] w-full border-2 border-[#a8a8a8] bg-white px-[2px] pt-[2px] outline-none" />
          <Marker className="-left-[7px] top-[15px] h-[56px] w-[50px]" />
        </div>
        <label htmlFor="tmsurl" className="mt-[14px] block">4. Edit generated TMS URL (optional)</label>
        <textarea
          id="tmsurl"
          spellCheck={false}
          defaultValue={"tms[19]:file:///{folderlocation}\\COD_NorthKivu\n_PNEO_22Mar2023/{z}/{x}/{y}.png"}
          className="block h-[77px] w-full resize-none overflow-hidden whitespace-pre bg-white pt-[5px] font-['Liberation_Mono',monospace] text-[17px] leading-[22px] text-[#222222] outline-none"
        />
        <div className="relative mt-[14px]">
          <label htmlFor="layername" className="block">5. Enter name for this layer</label>
          <input id="layername" type="text" defaultValue="North Kivu 22 Mar 2023" className="-mt-px block h-[53px] w-full border-2 border-[#a8a8a8] bg-white px-[2px] pt-[2px] outline-none" />
          <div aria-hidden="true" className="absolute left-[151px] top-[34px] h-4 w-px bg-black" />
          <Marker className="-left-[7px] top-[15px] h-[50px] w-[199px]" />
        </div>
        <div className="mt-[23px] flex justify-center gap-[7px] pr-[2px]">
          <ActionButton focused icon={<OkIcon />} className="w-[107px]">Okay</ActionButton>
          <ActionButton icon={<CancelIcon />} className="w-[114px]">Cancel</ActionButton>
          <ActionButton icon={<HelpIcon />} className="w-[100px]">Help</ActionButton>
        </div>
      </form>
    </div>
  );
}

export default function App() {
  return (
    <div className="relative flex min-h-screen bg-[linear-gradient(to_bottom,#4c4a44_0_66px,#0c0c0c_66px_126px,#1c1c1c_126px_885px,#dcdcdc_885px)] pr-[6px] font-['Noto_Sans','DejaVu_Sans',sans-serif] text-[13px] text-black">
      <div className="w-[2px] shrink-0 bg-[#4d4d49]" />
      <div className="flex min-w-0 flex-1 flex-col">
        <div aria-hidden="true" className="flex h-[2px]">
          <div className="w-[60%] bg-[#8f949c]" />
          <div className="w-[25%] bg-[#c9ccd2]" />
          <div className="flex-1 bg-[#3f4a38]" />
        </div>
        <div className="flex flex-1 flex-col bg-[#f0f0f0]">
          <div className="flex h-9 items-center bg-white pb-[2px] pl-2 pr-[14px] font-['Open_Sans',sans-serif] text-[14px] text-[#999999]">
            <JosmIcon />
            <span className="flex-1 pl-[6px]">Preferences</span>
            <button type="button" aria-label="Close">
              <svg width="14" height="14" viewBox="0 0 14 14" aria-hidden="true">
                <path d="M1 1l12 12M13 1L1 13" stroke="#8a8a8a" strokeWidth="1.2" />
              </svg>
            </button>
          </div>
          <div className="flex flex-1">
            <Sidebar />
            <ImageryPage />
          </div>
          <footer className="relative flex h-[74px] items-center justify-center pt-[9px]">
            <label className="absolute left-[11px] top-[33px] flex items-center gap-[5px]">
              <input type="checkbox" className="size-4 appearance-none border border-[#333] bg-white" />
              Expert Mode
            </label>
            <div className="flex gap-2 pl-[114px]">
              <ActionButton icon={<OkIcon />} className="w-[107px]">Okay</ActionButton>
              <ActionButton icon={<CancelIcon />} className="w-[114px]">Cancel</ActionButton>
              <ActionButton icon={<HelpIcon />} className="w-[100px]">Help</ActionButton>
            </div>
          </footer>
        </div>
        <div aria-hidden="true" className="flex h-[3px]">
          <div className="w-[60%] bg-[#4a4038]" />
          <div className="flex-1 bg-[#c4c4c4]" />
        </div>
      </div>
      <Marker className="left-0 top-0 z-20 h-[46px] w-[161px]" />
      <AddImageryDialog />
    </div>
  );
}
